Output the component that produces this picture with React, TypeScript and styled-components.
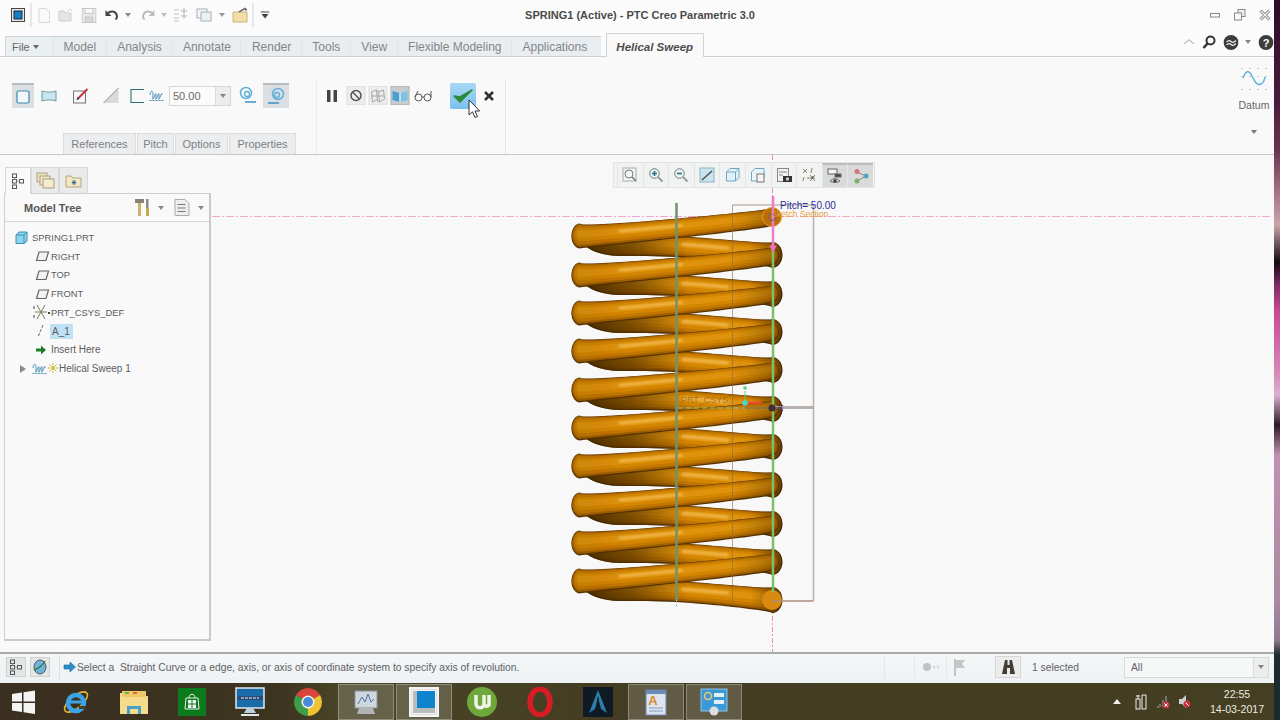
import * as React from "react"
import styled, { createGlobalStyle } from "styled-components"

const GlobalStyle = createGlobalStyle`
  html, body { margin: 0; padding: 0; background: #3a1030; overflow: hidden; }
  * { box-sizing: border-box; }
`

const Shell = styled.div`
  width: 1280px;
  height: 720px;
  display: flex;
  font-family: "Liberation Sans", Arial, sans-serif;
  color: #555;
`
const Win = styled.div`
  width: 1274px;
  height: 720px;
  display: flex;
  flex-direction: column;
  background: #f9f9fa;
`
const Wallpaper = styled.div`
  width: 6px;
  background: linear-gradient(180deg, #2c0c26 0, #4a1a3a 100px, #6a3350 150px, #a4707f 190px, #c9a5ab 225px, #15090f 262px, #7d2c62 285px, #c8488f 310px, #d884b8 370px, #dcb0d0 395px, #2a1a28 425px, #c290b0 455px, #a98aa3 600px, #8f7a90 640px, #1e2a30 655px, #1a2a30 720px);
`

/* stops: each child is centred on the left edge of its stop, so a row reads as a list of spacings */
const Stop = styled.div<{ $w: number }>`
  width: ${p => p.$w}px;
  flex: none;
  display: flex;
  align-items: center;
  height: 100%;
  & > * { flex: none; transform: translateX(-50%); }
`

const TitleBar = styled.div`
  height: 30px;
  flex: none;
  display: grid;
  grid-template-columns: 1fr auto 1fr;
  align-items: center;
  padding-left: 6px;
  background: #fbfbfb;
`
const QuickBar = styled.div`
  display: flex;
  height: 100%;
  padding-left: 12px;
`
const Sep = styled.div`
  width: 1px;
  height: 24px;
  background: #d4d4d4;
`
const TitleText = styled.div`
  font-size: 11px;
  font-weight: bold;
  color: #4a4a4a;
`
const WinButtons = styled.div`
  display: flex;
  height: 100%;
  justify-content: flex-end;
`

const TabRow = styled.div`
  height: 27px;
  flex: none;
  display: flex;
  align-items: flex-end;
  padding-left: 5px;
  border-bottom: 1px solid #cfcfcf;
  background: #fbfbfb;
`
const FileTab = styled.div`
  width: 48px;
  height: 20px;
  padding-left: 6px;
  display: flex;
  align-items: center;
  gap: 3px;
  font-size: 11px;
  color: #666;
  background: #eaeff1;
  border: 1px solid #d2d6d8;
  border-bottom: none;
`
const TabStrip = styled.div`
  display: flex;
  height: 20px;
  padding-right: 3px;
  background: #e9edef;
  border-top: 1px solid #cdd1d3;
`
const Tab = styled.div`
  padding: 0 10.5px;
  display: flex;
  align-items: center;
  font-size: 12px;
  font-weight: 500;
  color: #80878c;
  border-left: 1px solid #e2e6e8;
  margin-left: -1px;
`
const ActiveTab = styled.div`
  width: 98px;
  height: 24px;
  margin: 0 0 -1px 5px;
  padding-top: 2px;
  display: flex;
  align-items: center;
  justify-content: center;
  font-size: 11.5px;
  font-style: italic;
  font-weight: bold;
  color: #4c4c4c;
  background: #f9f9fa;
  border: 1px solid #d2d2d2;
  border-bottom: none;
`
const TabTools = styled.div`
  margin-left: auto;
  height: 24px;
  margin-bottom: 2px;
  display: flex;
`

const Ribbon = styled.div`
  height: 98px;
  flex: none;
  display: flex;
  background: #f9f9fa;
  border-bottom: 1px solid #c6c6c6;
`
const DialogGroup = styled.div`
  width: 316px;
  flex: none;
  display: flex;
  flex-direction: column;
`
const DialogRow = styled.div`
  height: 25px;
  margin-top: 26px;
  display: flex;
  padding-left: 23px;
`
const Toggle = styled.div<{ $w?: number }>`
  width: ${p => p.$w ?? 22}px;
  height: 25px;
  display: flex;
  align-items: center;
  justify-content: center;
  background: #dcdfe1;
  border-top: 2px solid #b9bcbe;
`
const Combo = styled.div`
  width: 62px;
  height: 20px;
  display: flex;
  align-items: center;
  padding-left: 3px;
  font-size: 11px;
  color: #6a6a6a;
  background: #fbfbfb;
  border: 1px solid #d4d6d8;
`
const ComboArrow = styled.div`
  margin-left: auto;
  width: 15px;
  height: 100%;
  background: #eceded;
  border-left: 1px solid #dcdcdc;
  display: flex;
  align-items: center;
  justify-content: center;
`
const Caret = styled.div<{ $c?: string }>`
  width: 0;
  height: 0;
  border-left: 3.5px solid transparent;
  border-right: 3.5px solid transparent;
  border-top: 4px solid ${p => p.$c ?? "#777"};
`
const SubTabs = styled.div`
  margin-top: auto;
  margin-left: 63px;
  height: 21px;
  display: flex;
`
const SubTab = styled.div<{ $w: number }>`
  width: ${p => p.$w}px;
  display: flex;
  align-items: center;
  justify-content: center;
  font-size: 11px;
  font-weight: 500;
  color: #7c8185;
  background: #ebedee;
  border: 1px solid #dadcdd;
  border-bottom: none;
  margin-right: 1px;
`
const ControlGroup = styled.div`
  width: 190px;
  flex: none;
  margin-top: 22px;
  padding: 4px 0 0 15px;
  display: flex;
  align-items: flex-start;
  border-left: 1px solid #ebebeb;
  border-right: 1px solid #e4e4e4;
`
const ControlRow = styled.div`
  height: 25px;
  display: flex;
  position: relative;
`
const OkButton = styled.div`
  width: 26px;
  height: 26px;
  border-radius: 2px;
  display: flex;
  align-items: center;
  justify-content: center;
  background: linear-gradient(180deg, #a8d8f6, #7cc0ee);
`
const SmallBox = styled.div<{ $on?: boolean }>`
  width: 19px;
  height: 19px;
  display: flex;
  align-items: center;
  justify-content: center;
  background: ${p => (p.$on ? "#c6cbce" : "#ececec")};
  border: 1px solid ${p => (p.$on ? "#b8b8b8" : "#e2e2e2")};
`
const Cursor = styled.svg`
  position: absolute;
  left: 136px;
  top: 16px;
`
const DatumGroup = styled.div`
  margin-left: auto;
  width: 40px;
  display: flex;
  flex-direction: column;
  align-items: center;
  padding-top: 9px;
  font-size: 10.5px;
  color: #666;
`
const DatumLabel = styled.div`
  margin-top: 5px;
`
const DatumCaret = styled.div`
  margin-top: 19px;
`

const Main = styled.div`
  flex: 1;
  min-height: 0;
  display: flex;
`
const LeftPanel = styled.div`
  width: 211px;
  flex: none;
  padding: 12px 0 11px 4px;
  display: flex;
  flex-direction: column;
`
const PanelTabs = styled.div`
  height: 27px;
  flex: none;
  display: flex;
  padding-left: 1px;
  margin-bottom: -1px;
`
const PanelTab = styled.div<{ $w: number; $on?: boolean }>`
  width: ${p => p.$w}px;
  display: flex;
  align-items: center;
  justify-content: center;
  background: ${p => (p.$on ? "#f9f9fa" : "#eaeaea")};
  border: 1px solid #d8d8d8;
  border-bottom: ${p => (p.$on ? "none" : "1px solid #d0d0d0")};
  position: relative;
  z-index: ${p => (p.$on ? 1 : 0)};
`
const PanelBody = styled.div`
  flex: 1;
  border: 1px solid #cfcfcf;
  border-right: 2px solid #c9c9c9;
  border-bottom: 2px solid #c9c9c9;
`
const PanelHead = styled.div`
  height: 28px;
  display: flex;
  border-bottom: 1px solid #d6d6d6;
  padding-left: 19px;
`
const PanelTitle = styled.div`
  width: 118px;
  display: flex;
  align-items: center;
  font-size: 11px;
  font-weight: bold;
  color: #555;
`
const Tree = styled.div`
  padding-top: 6px;
`
const TreeRow = styled.div<{ $x: number; $caps?: boolean }>`
  height: 18.75px;
  display: flex;
  align-items: center;
  padding-left: ${p => p.$x}px;
  font-size: ${p => (p.$caps ? 9.4 : 10)}px;
  color: #5c5c5c;
`
const Picked = styled.span`
  background: #bfe1f6;
  padding: 2px 3px 2px 2px;
  margin-left: -1px;
`

const Graphics = styled.div`
  flex: 1;
  position: relative;
  background: #f8f8f9;
`
const Canvas = styled.svg`
  display: block;
  width: 100%;
  height: 100%;
`
const ViewBar = styled.div`
  position: absolute;
  left: 402px;
  top: 7px;
  height: 26px;
  width: 262px;
  display: flex;
  padding-left: 3px;
  background: #f1f2f2;
  border: 1px solid #e2e3e3;
`
const ViewButton = styled.div<{ $on?: boolean }>`
  width: 25.6px;
  flex: none;
  display: flex;
  align-items: center;
  justify-content: center;
  background: ${p => (p.$on ? "#d9dadb" : "transparent")};
  border-left: 1px solid #e4e5e5;
  border-top: ${p => (p.$on ? "2px solid #bcbcbc" : "none")};
`

const StatusBar = styled.div`
  height: 31px;
  flex: none;
  display: flex;
  align-items: center;
  padding-bottom: 3px;
  border-top: 2px solid #a9a9a9;
  background: linear-gradient(180deg, #f4f6f7, #eef2f4);
  font-size: 10.3px;
  color: #5e6266;
`
const StatusBox = styled.div<{ $on?: boolean }>`
  width: 20px;
  height: 20px;
  margin-left: ${p => (p.$on ? 6 : 4)}px;
  display: flex;
  align-items: center;
  justify-content: center;
  background: #e4e5e5;
  border: 1px solid #cfd1d1;
`
const StatusMsg = styled.div`
  flex: 1;
  margin-left: 9px;
  padding-left: 3px;
  height: 24px;
  display: flex;
  align-items: center;
  gap: 1px;
  white-space: pre;
  border-left: 1px solid #dcdfe0;
`
const StatusCell = styled.div<{ $w: number; $pad?: number }>`
  width: ${p => p.$w}px;
  height: 24px;
  flex: none;
  display: flex;
  align-items: center;
  justify-content: ${p => (p.$pad ? "flex-start" : "center")};
  padding-left: ${p => p.$pad ?? 0}px;
  border-left: 1px solid #e4e7e8;
`
const FindButton = styled.div`
  width: 26px;
  height: 22px;
  margin: 0 11px 0 10px;
  flex: none;
  display: flex;
  align-items: center;
  justify-content: center;
  background: #ececec;
  border: 1px solid #d6d6d6;
`
const Selected = styled.div`
  width: 92px;
  flex: none;
`
const Filter = styled.div`
  width: 145px;
  height: 21px;
  flex: none;
  margin-right: 5px;
  padding-left: 6px;
  display: flex;
  align-items: center;
  background: #f6f7f7;
  border: 1px solid #d7dadb;
`

const Taskbar = styled.div`
  height: 37px;
  flex: none;
  display: flex;
  background: linear-gradient(90deg, #3a2f20 0, #3d3420 22%, #4a4628 27%, #433c22 48%, #443e22 100%);
`
const StartSlot = styled.div`
  width: 47px;
  flex: none;
  display: flex;
  align-items: center;
  justify-content: center;
`
const TaskSlot = styled.div<{ $run?: boolean }>`
  width: 56px;
  margin: 1px 1px 0;
  flex: none;
  display: flex;
  align-items: center;
  justify-content: center;
  background: ${p => (p.$run ? "rgba(255,255,255,.16)" : "transparent")};
  border: 1px solid ${p => (p.$run ? "rgba(255,255,255,.28)" : "transparent")};
`
const Tray = styled.div`
  margin-left: auto;
  display: flex;
  height: 100%;
`
const Clock = styled.div`
  width: 74px;
  flex: none;
  display: flex;
  flex-direction: column;
  align-items: center;
  justify-content: center;
  gap: 3px;
  font-size: 10.6px;
  line-height: 12px;
  color: #eceae0;
`

type SvgP = React.SVGProps<SVGSVGElement>
const I = ({ w = 16, h = 16, children, ...r }: SvgP & { w?: number; h?: number }) => (
  <svg width={w} height={h} viewBox={`0 0 ${w} ${h}`} fill="none" {...r}>{children}</svg>
)

const DropTiny = () => <Caret $c="#8a8a8a" />

const HierIcon = () => (
  <I w={14} h={16} stroke="#555">
    <rect x="1.5" y="1" width="4" height="3.5" /><rect x="1.5" y="6.5" width="4" height="3.5" /><rect x="1.5" y="12" width="4" height="3.5" /><rect x="8.5" y="6.5" width="4" height="3.5" />
    <path d="M3.5 4.5v2M3.5 10v2M5.5 8.2h3" stroke="#999" />
  </I>
)

/* tube of the spring, centre line runs across a half turn */
type Curve = (t: number) => number
const tube = (y0: number, y1: number, lift: Curve, hw: Curve, scale: number, shift: number, from = 0, to = 1) => {
  const top: string[] = []
  const bot: string[] = []
  const n = 40
  for (let i = 0; i <= n; i++) {
    const t = from + ((to - from) * i) / n
    const x = 676 - 96 * Math.cos(Math.PI * t)
    const u = (x - 580) / 192
    const y = y0 + (y1 - y0) * u + lift(t) + shift
    const d = hw(t) * scale
    top.push(`${x.toFixed(1)} ${(y - d).toFixed(1)}`)
    bot.unshift(`${x.toFixed(1)} ${(y + d).toFixed(1)}`)
  }
  const rEnd = hw(to) * scale
  const rStart = hw(from) * scale
  return `M${top.join("L")}A${(rEnd * 0.8).toFixed(1)} ${rEnd.toFixed(1)} 0 0 1 ${bot[0]}L${bot.join("L")}A${(rStart * 0.7).toFixed(1)} ${rStart.toFixed(1)} 0 0 1 ${top[0]}Z`
}
const frontW: Curve = t => 9.8 + 2.6 * Math.pow(1 - t, 3) - 1.2 * Math.pow(t, 2)
const backW: Curve = t => {
  const s = Math.min(1, t / 0.3)
  return (9.4 + 2.6 * Math.pow(t, 5)) * (s * s * (3 - 2 * s)) + 1
}
const frontLift: Curve = t => 2 * Math.sin(Math.PI * t)
const backLift: Curve = t => 7 * Math.exp(-Math.pow((t - 0.2) / 0.22, 2))

const layers: [number, number, string][] = [
  [1, 0, "#573300"],
  [0.92, -0.5, "#a06000"],
  [0.78, -1, "#c27700"],
  [0.56, -1.6, "#d48600"],
  [0.3, -2.2, "#de9208"],
]
const leftEnds = [236, 275, 313, 351, 390, 428, 466, 505, 543, 581]

const Strand = ({ y0, y1, lift, hw, fade, glow }: { y0: number; y1: number; lift: Curve; hw: Curve; fade: string; glow: [number, number] }) => (
  <g>
    <g filter="url(#soft)">
      {layers.map(([s, sh, c]) => <path key={s} d={tube(y0, y1, lift, hw, s, sh)} fill={c} />)}
    </g>
    <path d={tube(y0, y1, lift, hw, 1, 0)} fill={fade} filter="url(#soft)" />
    <path d={tube(y0, y1, lift, hw, 0.13, -2.6, glow[0], glow[1])} fill="#f6bf5a" fillOpacity=".85" filter="url(#glow)" />
  </g>
)

const Spring = () => (
  <Canvas viewBox="211 155 1063 497">
    <defs>
      <filter id="soft" x="-5%" y="-30%" width="110%" height="160%"><feGaussianBlur stdDeviation="0.55" /></filter>
      <filter id="glow" x="-20%" y="-300%" width="140%" height="700%"><feGaussianBlur stdDeviation="1.3" /></filter>
      <linearGradient id="backFade" gradientUnits="userSpaceOnUse" x1="585" x2="782" y1="0" y2="0">
        <stop offset="0" stopColor="#3f2500" stopOpacity=".9" />
        <stop offset=".25" stopColor="#4a2c00" stopOpacity=".62" />
        <stop offset=".52" stopColor="#4a2c00" stopOpacity="0" />
        <stop offset=".84" stopColor="#4a2c00" stopOpacity="0" />
        <stop offset="1" stopColor="#3a2200" stopOpacity=".6" />
      </linearGradient>
      <linearGradient id="frontFade" gradientUnits="userSpaceOnUse" x1="585" x2="782" y1="0" y2="0">
        <stop offset="0" stopColor="#4a2c00" stopOpacity=".1" />
        <stop offset=".2" stopColor="#4a2c00" stopOpacity="0" />
        <stop offset=".75" stopColor="#4a2c00" stopOpacity="0" />
        <stop offset="1" stopColor="#3a2200" stopOpacity=".4" />
      </linearGradient>
    </defs>

    <path d="M212 216.5H1272" stroke="#f0a8cc" strokeDasharray="8 2 2 2" />
    <path d="M772.5 155V205M772.5 605V652" stroke="#e88cb8" strokeDasharray="5 2 2 2" />

    {leftEnds.map(y => (
      <Strand key={y} y0={y} y1={y + 19} lift={backLift} hw={backW} fade="url(#backFade)" glow={[0.52, 0.68]} />
    ))}
    {leftEnds.map(y => (
      <Strand key={y} y0={y} y1={y - 19} lift={frontLift} hw={frontW} fade="url(#frontFade)" glow={[0.3, 0.52]} />
    ))}

    <circle cx="772" cy="600" r="10" fill="#d98a10" />
    <circle cx="772" cy="217" r="9.5" fill="#b96f06" stroke="#e89a2a" />

    <path d="M732.5 205H813.5V601H772" stroke="#a89a8c" fill="none" />
    <path d="M732.5 205V603" stroke="#8a6a4a" strokeOpacity=".6" />
    <path d="M813.5 205V601" stroke="#bcb0a4" strokeWidth="1.5" />
    <path d="M772 601H813" stroke="#b08474" />
    <path d="M676.5 203V601" stroke="#74926a" strokeWidth="2.5" />
    <path d="M676.5 601V607" stroke="#8fb5a8" strokeDasharray="2 1.5" />
    <path d="M773 248V592" stroke="#7cc06c" strokeWidth="2.5" />
    <path d="M773 196V248" stroke="#f07cc4" strokeWidth="2.5" />
    <path d="M769 245.5h8l-4 7z" fill="#ee70bc" />

    <path d="M745 408H813" stroke="#6e6a6a" />
    <path d="M772 406.5H813" stroke="#c0b4ae" />
    <path d="M678 408H745" stroke="#7cc8a0" strokeDasharray="5 3" />
    <path d="M745 391V403" stroke="#5cd07a" />
    <circle cx="745" cy="388" r="1.8" fill="#5cd07a" />
    <circle cx="745" cy="403" r="2.8" fill="#4cd4c8" />
    <path d="M748 403H762" stroke="#e8482c" strokeWidth="2.5" />
    <circle cx="772" cy="408" r="3.5" fill="#3a3036" />
    <path d="M778 405l5 6M783 405l-5 6" stroke="#4a3a9a" />
    <text x="681" y="403" fontSize="9" fill="#8c5a1a" fillOpacity=".7" fontFamily="Liberation Sans">PRT_CSYS</text>

    <circle cx="772" cy="217" r="3.5" fill="none" stroke="#7a4f9a" />
    <text x="780" y="209" fontSize="10" fill="#2e2e96" fontFamily="Liberation Sans">Pitch= 50.00</text>
    <text x="771" y="217" fontSize="8.6" fill="#e8a040" fontFamily="Liberation Sans">Sketch Section</text>
  </Canvas>
)

const Magnifier = ({ mark }: { mark?: string }) => (
  <I stroke="#6d7d86">
    <circle cx="6.5" cy="6.5" r="4.8" fill={mark ? "#e8f5ee" : "#f4f7f9"} />
    <path d="M10 10l4.5 4.5" strokeWidth="2" stroke="#9a9a9a" />
    {mark && <path d={mark} stroke={mark.includes("M6.5 4") ? "#1c7a5a" : "#2b6d88"} strokeWidth="1.6" />}
  </I>
)

const TreePlane = () => (
  <I w={18} h={12}><path d="M3.5 10.5h9.5l2.5-8.5H6z" stroke="#666" strokeWidth="1.2" fill="#f2f2f2" /></I>
)
const CoilIcon = ({ w = 16 }: { w?: number }) => (
  <I w={w} h={12} stroke="#4b8fb5">
    <path d="M1 5c.5-5 3-5 3 0s-1 4 0 4 3-9 3-4-1 4 0 4 3-9 3-4-1 4 0 4 3-9 3-4" />
    <path d="M0.5 10.5H15" strokeDasharray="2 1" />
  </I>
)

export default function App() {
  return (
    <Shell>
      <GlobalStyle />
      <Win>
        <TitleBar>
          <QuickBar>
            <Stop $w={13}>
              <I w={14} h={14}><rect x=".5" y=".5" width="13" height="13" fill="#e8e8e8" stroke="#444" /><rect x="3" y="3" width="8" height="8" fill="#1180c8" stroke="#223" /></I>
            </Stop>
            <Stop $w={13}><Sep /></Stop>
            <Stop $w={22}><I w={12} h={15}><path d="M1 .5h7l3.5 3.5v10.5H1z" fill="#fafafa" stroke="#d6d6d6" /></I></Stop>
            <Stop $w={23}><I><path d="M1 14V4h5l1 2h6v8z" fill="#e4e4e4" stroke="#cfcfcf" /><path d="M9 5l3-3 2 2" stroke="#cfcfcf" /></I></Stop>
            <Stop $w={23}><I w={15} h={15}><rect x=".5" y=".5" width="14" height="14" fill="#e8e8e8" stroke="#c8c8c8" /><rect x="3.5" y=".5" width="8" height="5" fill="#f8f8f8" stroke="#c8c8c8" /><rect x="4" y="9" width="7" height="5.5" fill="#d8d8d8" stroke="#c8c8c8" /></I></Stop>
            <Stop $w={16}><I w={15} h={12}><path d="M2.5 4.5c5-4 10-2 10 4l-1.5 2" stroke="#444" strokeWidth="2" /><path d="M1 1v6h6z" fill="#444" /></I></Stop>
            <Stop $w={20}><DropTiny /></Stop>
            <Stop $w={16}><I w={15} h={12}><path d="M12.5 4.5c-5-4-10-2-10 4l1.5 2" stroke="#bcbcbc" strokeWidth="2" /><path d="M14 1v6H8z" fill="#bcbcbc" /></I></Stop>
            <Stop $w={17}><Caret $c="#bbb" /></Stop>
            <Stop $w={23}><I stroke="#c2c2c2"><path d="M1 3h5M1 7h5M1 11h5M1 14h5" /><path d="M8 4h6M8 9h6M11 1v5M11 6v6" stroke="#aeb6ba" /></I></Stop>
            <Stop $w={18}><I stroke="#a8b0b4"><rect x="1" y="2" width="10" height="9" fill="#f2f4f5" /><rect x="5" y="5" width="10" height="9" fill="#eaf1f4" /></I></Stop>
            <Stop $w={18}><Caret $c="#999" /></Stop>
            <Stop $w={13}><I><path d="M1 5h14v10H1z" fill="#f2dfa8" stroke="#c8b47c" /><path d="M7 5l6-3.5 1.5 2" stroke="#555" strokeWidth="1.4" /></I></Stop>
            <Stop $w={12}><Sep /></Stop>
            <Stop $w={10}><I w={9} h={8}><path d="M0 1h9" stroke="#444" /><path d="M1 3h7L4.500 7.500z" fill="#444" /></I></Stop>
          </QuickBar>
          <TitleText>SPRING1 (Active) - PTC Creo Parametric 3.0</TitleText>
          <WinButtons>
            <Stop $w={25}><I w={10} h={6}><rect x=".5" y="1.500" width="9" height="3.500" fill="#fff" stroke="#888" /></I></Stop>
            <Stop $w={25}><I w={12} h={12} stroke="#888"><rect x="4" y=".5" width="7" height="7" fill="#eee" /><rect x=".5" y="4" width="7" height="7" fill="#fafafa" /></I></Stop>
            <Stop $w={9}><I w={12} h={12}><path d="M1.500 1.500l9 9M10.500 1.500l-9 9" stroke="#777" strokeWidth="3" /><path d="M1.500 1.500l9 9M10.500 1.500l-9 9" stroke="#f4f4f4" strokeWidth="1.300" /></I></Stop>
          </WinButtons>
        </TitleBar>

        <TabRow>
          <FileTab>File <Caret $c="#666" /></FileTab>
          <TabStrip>
            {["Model", "Analysis", "Annotate", "Render", "Tools", "View", "Flexible Modeling", "Applications"].map(t => <Tab key={t}>{t}</Tab>)}
          </TabStrip>
          <ActiveTab>Helical Sweep</ActiveTab>
          <TabTools>
            <Stop $w={20}><I w={12} h={8}><path d="M1 6l5-4 5 4" stroke="#c2c2c2" strokeWidth="1.500" /></I></Stop>
            <Stop $w={22}><I w={14} h={14}><circle cx="8.500" cy="5.500" r="4" stroke="#333" strokeWidth="2" /><path d="M5.500 8.500L1.500 13" stroke="#333" strokeWidth="2.500" /></I></Stop>
            <Stop $w={17}><I w={15} h={15}><circle cx="7.500" cy="7.500" r="7.500" fill="#3c3c3c" /><path d="M3 7c2-2 3-2 4.500-.5S11 7 12.500 5.500M3 10c2-2 3-2 4.500-.5s3.500.5 5-1" stroke="#eee" strokeWidth="1.200" /></I></Stop>
            <Stop $w={18}><Caret $c="#888" /></Stop>
            <Stop $w={8}><I w={15} h={15}><circle cx="7.500" cy="7.500" r="7.500" fill="#3c3c3c" /><text x="7.500" y="11.500" textAnchor="middle" fontSize="11" fontWeight="bold" fill="#fff" fontFamily="Liberation Sans">?</text></I></Stop>
          </TabTools>
        </TabRow>

        <Ribbon>
          <DialogGroup>
            <DialogRow>
              <Stop $w={26}><Toggle><I w={14} h={14}><rect x="1" y="1" width="12" height="12" rx="1.500" fill="#f4f8fb" stroke="#3a86b0" strokeWidth="1.200" /></I></Toggle></Stop>
              <Stop $w={32}><I><path d="M1 3c4 1.500 10 1.500 14 0v10c-4-1.500-10-1.500-14 0z" fill="#c7e8ee" stroke="#6f9aa5" /></I></Stop>
              <Stop $w={30}><I w={17} h={17}><rect x="1" y="4" width="12" height="12" fill="#f6f6f6" stroke="#777" /><path d="M6 11L15 2" stroke="#c8343c" strokeWidth="2" /><path d="M4 13l1-3 2 2z" fill="#222" /></I></Stop>
              <Stop $w={26}><I w={17} h={17}><path d="M1 16L16 1v15z" fill="#dadada" /><path d="M1 16L16 1" stroke="#888" /></I></Stop>
              <Stop $w={20}><I w={15} h={15}><path d="M14.500 1.500H1.500v13h13" stroke="#2f6f78" strokeWidth="1.100" /></I></Stop>
              <Stop $w={43}><CoilIcon /></Stop>
              <Stop $w={48}><Combo>50.00<ComboArrow><Caret $c="#888" /></ComboArrow></Combo></Stop>
              <Stop $w={28}><I w={20} h={20}><circle cx="8" cy="7" r="5.500" stroke="#5cb0dc" strokeWidth="1.500" /><circle cx="9" cy="8" r="2.500" stroke="#5cb0dc" strokeWidth="1.300" /><path d="M7 16h11" stroke="#3a92c4" strokeWidth="1.500" /></I></Stop>
              <Stop $w={28}><Toggle $w={26}><I w={20} h={20}><circle cx="12" cy="7" r="5.500" stroke="#5cb0dc" strokeWidth="1.500" /><circle cx="11" cy="8" r="2.500" stroke="#5cb0dc" strokeWidth="1.300" /><path d="M2 16h11" stroke="#3a92c4" strokeWidth="1.500" /></I></Toggle></Stop>
            </DialogRow>
            <SubTabs>
              <SubTab $w={73}>References</SubTab>
              <SubTab $w={37}>Pitch</SubTab>
              <SubTab $w={53}>Options</SubTab>
              <SubTab $w={67}>Properties</SubTab>
            </SubTabs>
          </DialogGroup>
          <ControlGroup>
            <ControlRow>
              <Stop $w={24}><I w={12} h={14}><rect x="1" y="1" width="3.500" height="12" fill="#444" /><rect x="7.500" y="1" width="3.500" height="12" fill="#444" /></I></Stop>
              <Stop $w={22}><SmallBox><I w={13} h={13} stroke="#555" strokeWidth="1.500"><circle cx="6.500" cy="6.500" r="5" /><path d="M3 3l7 7" /></I></SmallBox></Stop>
              <Stop $w={22}><SmallBox><I w={17} h={15} stroke="#a6a6a6"><path d="M2 4l5-2 2 2 5-2 1 9-5 3-3-2-4 2zM7 2l1 11M9 4l1 10M2 8h13" /></I></SmallBox></Stop>
              <Stop $w={23}><SmallBox $on><I w={17} h={15}><path d="M1 3l7 2v9l-7-2z" fill="#4c9ed0" /><path d="M16 3l-7 2v9l7-2z" fill="#7cc0e4" /><path d="M8.500 5V14" stroke="#f4f4f4" /></I></SmallBox></Stop>
              <Stop $w={40}><I w={18} h={12} stroke="#555"><circle cx="4.500" cy="7.500" r="3.500" /><circle cx="13.500" cy="7.500" r="3.500" /><path d="M8 7h2M1 7l3-6M17 7V1" /></I></Stop>
              <Stop $w={26}><OkButton><I w={22} h={18}><path d="M2 9l6 6L20 3l-12 7z" fill="#2a8a3c" stroke="#2a8a3c" strokeWidth="1.500" strokeLinejoin="round" /></I></OkButton></Stop>
              <Stop $w={16}><I w={12} h={12}><path d="M2 2l8 8M10 2l-8 8" stroke="#333" strokeWidth="2.500" /></I></Stop>
              <Cursor width="14" height="20" viewBox="0 0 14 20"><path d="M1 1v15l3.500-3.200 2.500 5.700 2.500-1-2.500-5.500h4.700z" fill="#fff" stroke="#333" /></Cursor>
            </ControlRow>
          </ControlGroup>
          <DatumGroup>
            <I w={28} h={28}>
              <path d="M3 12c3-8 6-8 9-2s5 10 9 8 3-4 4-7" stroke="#58b4d8" strokeWidth="1.500" />
              <path d="M2 2v1M10 2v1M18 2v1M26 2v1M2 10v1M10 10v1M18 10v1M26 10v1M2 23v1M10 23v1M18 23v1M26 23v1" stroke="#999" />
            </I>
            <DatumLabel>Datum</DatumLabel>
            <DatumCaret><Caret $c="#777" /></DatumCaret>
          </DatumGroup>
        </Ribbon>

        <Main>
          <LeftPanel>
            <PanelTabs>
              <PanelTab $w={26} $on><HierIcon /></PanelTab>
              <PanelTab $w={28}><I w={19} h={17}><rect x="1" y="1" width="10" height="9" fill="#f0e2b8" stroke="#a8a08a" /><rect x="4" y="4" width="10" height="9" fill="#f2e6c2" stroke="#a8a08a" /><rect x="7" y="7" width="11" height="9" fill="#f6ebca" stroke="#a8a08a" /></I></PanelTab>
              <PanelTab $w={29}><I w={17} h={14}><path d="M1 13V2h5l2 2h8v9z" fill="#f3e6c0" stroke="#b0a484" /><path d="M9 6v5M6.800 8.500h4.400M7.300 7l3.400 3M10.700 7l-3.400 3" stroke="#2f6f9a" /></I></PanelTab>
            </PanelTabs>
            <PanelBody>
              <PanelHead>
                <PanelTitle>Model Tree</PanelTitle>
                <Stop $w={19}><I w={16} h={19}><rect x="1" y="1" width="9" height="4" fill="#8a8272" /><rect x="4" y="5" width="3" height="13" fill="#cdb06a" /><rect x="12" y="1" width="2.500" height="9" fill="#8a8a8a" /><rect x="12" y="10" width="3" height="8" fill="#c8a848" /></I></Stop>
                <Stop $w={21}><Caret $c="#888" /></Stop>
                <Stop $w={19}><I w={16} h={17}><path d="M1 .5h10l4 4v12H1z" fill="#eeeeee" stroke="#aaa" /><path d="M3.500 5.500h8M3.500 9h8M3.500 12.500h8" stroke="#777" /></I></Stop>
                <Stop $w={8}><Caret $c="#888" /></Stop>
              </PanelHead>
              <Tree>
                <TreeRow $x={10} $caps>
                  <I w={17} h={13}><path d="M1 4l3-3h8v9l-3 2.500H1z" fill="#8ed4ee" stroke="#3d8fb4" /><path d="M1 4h8v8.500M9 4l3-3" stroke="#3d8fb4" /></I>
                  SPRING1.PRT
                </TreeRow>
                {["RIGHT", "TOP", "FRONT"].map(t => (
                  <TreeRow key={t} $x={28} $caps><TreePlane />{t}</TreeRow>
                ))}
                <TreeRow $x={28} $caps>
                  <I w={18} h={16}><path d="M4 1l8 14M12 1L4 15" stroke="#7a7a5a" /><path d="M2 8h12" stroke="#7a7a5a" /><path d="M1 5V2M1 14v-3M15 8l2 2M17 8l-2 2" stroke="#444" /></I>
                  PRT_CSYS_DEF
                </TreeRow>
                <TreeRow $x={28}>
                  <I w={18} h={14}><path d="M10 1L5 13" stroke="#666" strokeDasharray="3 1.500" /></I>
                  <Picked>A_1</Picked>
                </TreeRow>
                <TreeRow $x={28}>
                  <I w={18} h={12}><path d="M3 4.500h5V1.500L13 6 8 10.500V7.500H3z" fill="#1f7a2a" /></I>
                  Insert Here
                </TreeRow>
                <TreeRow $x={13}>
                  <I w={14} h={12}><path d="M2 2l6 4-6 4z" fill="#8a8a8a" /></I>
                  <CoilIcon />
                  <I w={11} h={12}><circle cx="5" cy="5" r="2.200" fill="#d8c23a" /><path d="M5 0v2M5 8v2M0 5h2M8 5h2M1.500 1.500l1.500 1.500M7 7l1.500 1.500M8.500 1.500L7 3M3 7l-1.500 1.500" stroke="#a8a020" strokeWidth=".8" /></I>
                  Helical Sweep 1
                </TreeRow>
              </Tree>
            </PanelBody>
          </LeftPanel>

          <Graphics>
            <Spring />
            <ViewBar>
              <ViewButton><I stroke="#6d7d86"><rect x="1" y="1" width="13" height="13" fill="#f4f4f4" stroke="#aaa" /><circle cx="7" cy="7" r="4" /><path d="M10 10l4 4" strokeWidth="1.600" /></I></ViewButton>
              <ViewButton><Magnifier mark="M6.500 4v5M4 6.500h5" /></ViewButton>
              <ViewButton><Magnifier mark="M4 6.500h5" /></ViewButton>
              <ViewButton><I><rect x="1" y="1" width="14" height="14" fill="#c8e4ee" stroke="#8fb4c2" /><path d="M3 13L13 4" stroke="#555" strokeWidth="1.600" /></I></ViewButton>
              <ViewButton><I stroke="#6ea8c4"><path d="M1.500 5l3.500-3.500h9v9L10.500 14h-9z" fill="#e4f2f8" /><path d="M1.500 5h9v9M10.500 5L14 1.500" /></I></ViewButton>
              <ViewButton><I stroke="#6ea8c4"><path d="M1.500 5l3.500-3.500h9v9L10.500 14h-9z" fill="#eaf4f8" /><rect x="7" y="7" width="7" height="8" fill="#f4f4f4" stroke="#777" /></I></ViewButton>
              <ViewButton><I><rect x="1.500" y="1.500" width="11" height="13" fill="#f0f0f0" stroke="#888" /><path d="M3 5h8M3 8h4" stroke="#888" /><rect x="7" y="9" width="9" height="6" fill="#333" /><circle cx="11.500" cy="12" r="1.700" fill="#ccc" /></I></ViewButton>
              <ViewButton><I><path d="M2 2l4 4M6 2L2 6M11 1l-1 5M3 10l-1 4M9 8l5 6M14 8l-5 6M6 11h8" stroke="#8a8a6a" /><path d="M12 9l-1 3" stroke="#444" /></I></ViewButton>
              <ViewButton $on><I stroke="#666"><rect x="1" y="1" width="9" height="5" fill="#f4f4f4" /><rect x="8" y="6" width="6" height="3" fill="#444" /><path d="M3 13c3-3 7-3 10 0-3 2-7 2-10 0z" fill="#ddd" /><circle cx="8" cy="13" r="1.500" fill="#333" /></I></ViewButton>
              <ViewButton $on><I><path d="M4 4l9 4-9 5" stroke="#888" /><circle cx="4" cy="3.500" r="2.500" fill="#d8726a" /><circle cx="13" cy="8" r="2.500" fill="#5ca0c0" /><circle cx="4" cy="13" r="2.500" fill="#7cb06a" /></I></ViewButton>
            </ViewBar>
          </Graphics>
        </Main>

        <StatusBar>
          <StatusBox $on><HierIcon /></StatusBox>
          <StatusBox><I w={16} h={16}><ellipse cx="8" cy="8" rx="6" ry="7" fill="#6cb4dc" stroke="#555" /><path d="M2 11c4-1 9-5 11-9" stroke="#3e7a4a" strokeWidth="1.500" /></I></StatusBox>
          <StatusMsg>
            <I w={13} h={12}><path d="M1 4h6V1l5.500 5L7 11V8H1z" fill="#2a8fc8" stroke="#1a6a9a" strokeWidth=".6" /></I>
            {"Select a  Straight Curve or a edge, axis, or axis of coordinate system to specify axis of revolution."}
          </StatusMsg>
          <StatusCell $w={30} />
          <StatusCell $w={32}><I w={22} h={10}><circle cx="7" cy="5" r="4" fill="#c2c2c2" /><circle cx="14" cy="5" r="1.500" fill="#d8d8d8" /><circle cx="18" cy="5" r="1.500" fill="#d8d8d8" /></I></StatusCell>
          <StatusCell $w={39} $pad={5}><I w={14} h={17}><path d="M3 0v17" stroke="#b4b4b4" strokeWidth="1.500" /><path d="M4 1h9l-3 4 3 4H4z" fill="#c6c6c6" /></I></StatusCell>
          <FindButton><I w={15} h={16}><path d="M4 1h2.500v5h2V1H11l3 14H9V9H6v6H1z" fill="#443e32" /></I></FindButton>
          <Selected>1 selected</Selected>
          <Filter>All<ComboArrow><Caret $c="#888" /></ComboArrow></Filter>
        </StatusBar>

        <Taskbar>
          <StartSlot>
            <I w={25} h={24}><path d="M1 4l10-1.500v9H1zM12.500 2.200L24 .5v11H12.500zM1 13h10v9L1 20.500zM12.500 13H24v11l-11.500-1.800z" fill="#f4f4f4" /></I>
          </StartSlot>
          <TaskSlot>
            <I w={28} h={28}><ellipse cx="14" cy="14" rx="14" ry="6" transform="rotate(-40 14 14)" stroke="#e0b83c" strokeWidth="1.600" /><circle cx="14" cy="15" r="8" stroke="#3aa4e8" strokeWidth="4.500" /><path d="M8 14h13" stroke="#3aa4e8" strokeWidth="3" /><path d="M17 18l7 0 0 3-7 0z" fill="#404028" /></I>
          </TaskSlot>
          <TaskSlot>
            <I w={30} h={26}><path d="M1 4h11l2 3h15v18H1z" fill="#f4dc8c" /><rect x="3" y="2" width="24" height="6" fill="#eec964" /><rect x="6" y="3" width="4" height="2" fill="#5cb858" /><rect x="14" y="3" width="4" height="2" fill="#d86a4a" /><path d="M8 25v-8h14v8h-3v-5h-8v5z" fill="#4aa0c8" /></I>
          </TaskSlot>
          <TaskSlot>
            <I w={28} h={28}><rect width="28" height="28" fill="#0a7a1c" /><path d="M8 10h12l1 11H7z" fill="#0a7a1c" stroke="#e8f4e8" /><path d="M11 10c0-5 6-5 6 0" stroke="#e8f4e8" /><path d="M10 12h3.500v3.500H10zM14.500 12H18v3.500h-3.500zM10 16.500h3.500V20H10zM14.500 16.500H18V20h-3.500z" fill="#f4f4f4" /></I>
          </TaskSlot>
          <TaskSlot>
            <I w={30} h={30}><rect x="1" y="1" width="28" height="20" fill="#1a6ca8" stroke="#dfe8ee" strokeWidth="1.500" /><rect x="2" y="9" width="26" height="4" fill="#2c4c7c" /><path d="M6 11h18" stroke="#e8eef4" strokeDasharray="3 1" /><path d="M12 21h6l3 5H9z" fill="#bcd2e2" /><path d="M6 27h18v2H6z" fill="#dfe8ee" /></I>
          </TaskSlot>
          <TaskSlot>
            <I w={28} h={28}><path d="M14 14L26.100 7A14 14 0 0 0 1.900 7z" fill="#d8453a" /><path d="M14 14L1.900 7A14 14 0 0 0 14 28z" fill="#3f9e4a" /><path d="M14 14L14 28A14 14 0 0 0 26.100 7z" fill="#f0c430" /><circle cx="14" cy="14" r="6.500" fill="#f4f4f4" /><circle cx="14" cy="14" r="5" fill="#4a8ad8" /></I>
          </TaskSlot>
          <TaskSlot $run>
            <I w={28} h={28}><rect x="3" y="3" width="22" height="17" fill="#cfd6dc" stroke="#8a949c" /><path d="M6 16l4-7 3 5 3-8 3 8 3-3" stroke="#4a78a8" /><path d="M7 20h14l2 6H5z" fill="#b0b4b4" /></I>
          </TaskSlot>
          <TaskSlot $run>
            <I w={30} h={30}><rect width="30" height="30" fill="#f4f4f4" /><rect x="4" y="4" width="22" height="22" fill="#b8bcbc" /><rect x="8" y="4" width="18" height="17" fill="#0f84cc" /><rect x="2.500" y="2.500" width="25" height="25" stroke="#222" fill="none" strokeOpacity=".1" /></I>
          </TaskSlot>
          <TaskSlot>
            <I w={30} h={30}><circle cx="15" cy="15" r="15" fill="#6ea83a" /><path d="M9 8v9c0 5 8 5 8 0V8M17 15c0 5 3 5 5 3V8" stroke="#f0f4e8" strokeWidth="3.500" /></I>
          </TaskSlot>
          <TaskSlot>
            <I w={28} h={30}><ellipse cx="14" cy="15" rx="10" ry="13" stroke="#d81c24" strokeWidth="5.500" /></I>
          </TaskSlot>
          <TaskSlot>
            <I w={30} h={30}><rect width="30" height="30" fill="#0f1a24" /><path d="M15 3L6 26l6-4 3-12 3 12 6 4z" fill="#2a7ea8" /><path d="M15 10v14" stroke="#0f1a24" /></I>
          </TaskSlot>
          <TaskSlot $run>
            <I w={24} h={28}><rect x="2" y="2" width="20" height="25" fill="#dde4f0" stroke="#6e88b8" /><rect x="2" y="2" width="20" height="4" fill="#6e88b8" /><text x="9" y="17" textAnchor="middle" fontSize="13" fontWeight="bold" fill="#d88a2a" fontFamily="Liberation Sans">A</text><path d="M5 20h14M5 23h14" stroke="#8a9ab8" /></I>
          </TaskSlot>
          <TaskSlot $run>
            <I w={28} h={28}><rect x="1" y="1" width="26" height="22" fill="#3a9ad8" stroke="#8cc4e8" /><circle cx="8" cy="8" r="3.500" stroke="#f4c86a" strokeWidth="1.500" /><rect x="14" y="5" width="10" height="4" fill="#dff0fa" /><rect x="14" y="12" width="10" height="4" fill="#dff0fa" /><circle cx="14" cy="23" r="4.500" fill="#dedede" /></I>
          </TaskSlot>
          <Tray>
            <Stop $w={24}><I w={8} h={5}><path d="M0 5l4-5 4 5z" fill="#eee" /></I></Stop>
            <Stop $w={22}><I w={12} h={16}><rect x="1" y="5" width="4" height="10" fill="none" stroke="#eee" /><path d="M7 1h4v14H7z" fill="none" stroke="#eee" /><path d="M3 1v4M1 2h4" stroke="#eee" /></I></Stop>
            <Stop $w={22}><I w={14} h={16}><path d="M1 13h2M4 13V10M7 13V6M10 13V2" stroke="#888" strokeWidth="1.400" /><circle cx="10" cy="11" r="3.500" fill="#c8343c" /><path d="M8.500 9.500l3 3M11.500 9.500l-3 3" stroke="#fff" /></I></Stop>
            <Stop $w={15}><I w={14} h={16}><path d="M1 5h3l4-4v13l-4-4H1z" fill="#c8ced4" /><circle cx="9" cy="10" r="3.500" fill="#c8343c" /><path d="M7.500 8.500l3 3" stroke="#fff" /></I></Stop>
            <Clock>
              <div>22:55</div>
              <div>14-03-2017</div>
            </Clock>
          </Tray>
        </Taskbar>
      </Win>
      <Wallpaper />
    </Shell>
  )
}
